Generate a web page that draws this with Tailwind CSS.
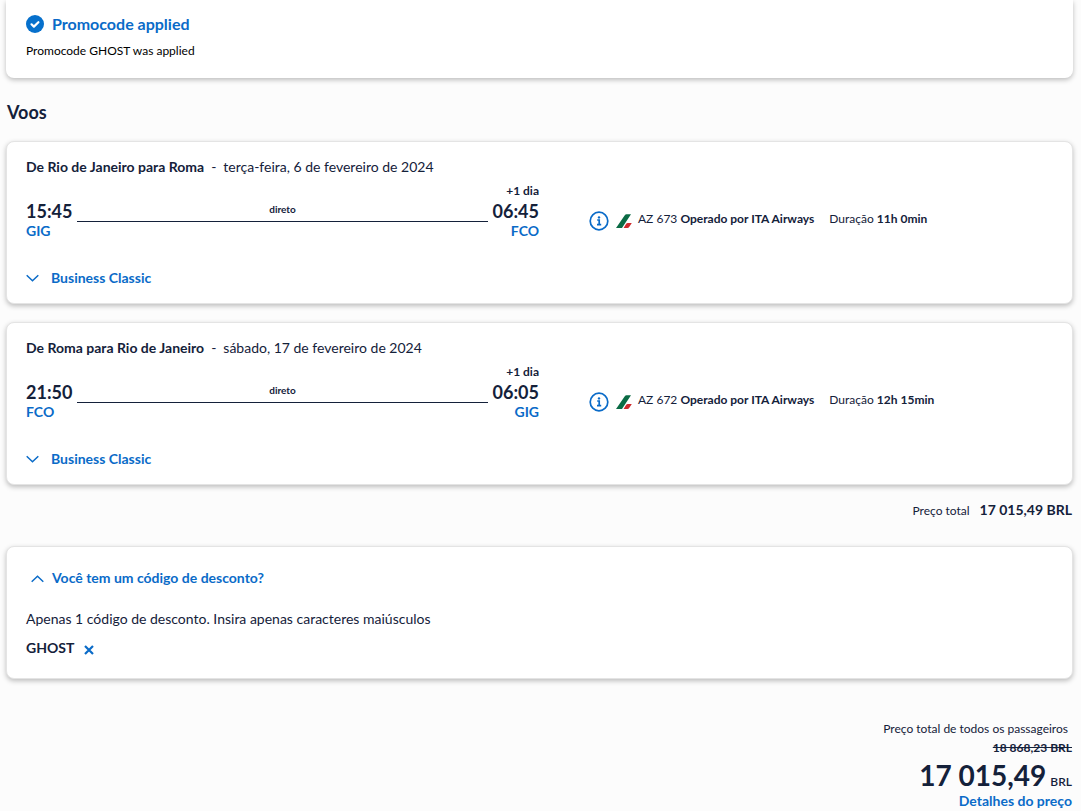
<!DOCTYPE html>
<html lang="pt">
<head>
    <meta charset="UTF-8">
    <meta name="viewport" content="width=device-width, initial-scale=1.0">
    <title>Resumo da viagem</title>
    <script src="https://cdn.jsdelivr.net/npm/@tailwindcss/browser@4"></script>
</head>
<body class="min-h-screen overflow-x-hidden bg-[#fcfcfc] font-['Lato',sans-serif] text-sm leading-5 text-[#14213a]">
    <main class="pr-2 pl-[6px]">
        <!-- Promocode notice -->
        <section class="rounded-b-lg bg-white px-5 pt-3 pb-[17px] shadow-[0_2px_5px_rgba(0,0,0,0.25)]">
            <div class="flex items-center gap-2">
                <svg class="size-[18px]" viewBox="0 0 18 18" aria-hidden="true">
                    <circle cx="9" cy="9" r="9" fill="#0670cc"/>
                    <path d="M5.5 9.3l2.4 2.3 4.5-4.4" fill="none" stroke="#fff" stroke-width="2.2" stroke-linecap="round" stroke-linejoin="round"/>
                </svg>
                <h2 class="text-base font-bold text-[#0a6bc8]">Promocode applied</h2>
            </div>
            <p class="mt-[5px] text-xs leading-5 text-black">Promocode GHOST was applied</p>
        </section>

        <h1 class="mt-[22px] pl-px text-lg leading-6 font-bold">Voos</h1>

        <!-- Outbound flight -->
        <section class="mt-[17px] rounded-lg border border-[#e4e4e4] bg-white px-[19px] py-[15px] shadow-[0_2px_5px_rgba(0,0,0,0.25)]">
            <h2><span class="font-bold">De Rio de Janeiro para Roma</span><span class="mx-[7px]">-</span><span>terça-feira, 6 de fevereiro de 2024</span></h2>
            <div class="mt-1 flex items-end">
                <div class="flex w-[513px] items-end">
                    <div>
                        <p class="text-lg leading-5 font-bold">15:45</p>
                        <a href="#" class="block leading-5 font-bold text-[#0a6bc8]">GIG</a>
                    </div>
                    <div class="mx-[5px] mb-[19px] flex-1 border-b border-[#14213a] pb-[2px] text-center text-[10px] leading-5 font-bold">direto</div>
                    <div class="text-right">
                        <p class="text-xs leading-5 font-bold">+1 dia</p>
                        <p class="text-lg leading-5 font-bold">06:45</p>
                        <a href="#" class="block leading-5 font-bold text-[#0a6bc8]">FCO</a>
                    </div>
                </div>
                <div class="mb-2 ml-[50px] flex items-center text-xs leading-5">
                    <button type="button" aria-label="Informações do voo">
                        <svg class="size-5" viewBox="0 0 20 20" fill="none" aria-hidden="true">
                            <circle cx="10" cy="10" r="8.8" stroke="#0a6bc8" stroke-width="1.7"/>
                            <path d="M8.2 9h2v4.4M8 13.7h4.2" stroke="#0a6bc8" stroke-width="1.7"/>
                            <circle cx="10" cy="6.4" r="1.2" fill="#0a6bc8"/>
                        </svg>
                    </button>
                    <svg class="ml-[7px] h-4 w-4" viewBox="0 0 16 16" aria-hidden="true">
                        <path d="M0 15L8.8 2.3Q9.4 1.3 10.5 1.3H15L6 15z" fill="#0b6b45"/>
                        <path d="M7.6 15l2.6-4.2q.6-.9 1.6-.9h4L13 14.2q-.5.8-1.5.8z" fill="#cf2a2e"/>
                    </svg>
                    <p class="ml-[6px] mb-1">AZ 673 <b>Operado por ITA Airways</b></p>
                    <p class="ml-[15px] mb-1">Duração <b>11h 0min</b></p>
                </div>
            </div>
            <button type="button" class="mt-[27px] flex cursor-pointer items-center gap-3 font-bold text-[#0a6bc8]">
                <svg class="h-3 w-[13px]" viewBox="0 0 13 12" fill="none" aria-hidden="true"><path d="M.7 3.2l5.8 5.6 5.8-5.6" stroke="#0a6bc8" stroke-width="1.5"/></svg>
                Business Classic
            </button>
        </section>

        <!-- Return flight -->
        <section class="mt-[18px] rounded-lg border border-[#e4e4e4] bg-white px-[19px] py-[15px] shadow-[0_2px_5px_rgba(0,0,0,0.25)]">
            <h2><span class="font-bold">De Roma para Rio de Janeiro</span><span class="mx-[7px]">-</span><span>sábado, 17 de fevereiro de 2024</span></h2>
            <div class="mt-1 flex items-end">
                <div class="flex w-[513px] items-end">
                    <div>
                        <p class="text-lg leading-5 font-bold">21:50</p>
                        <a href="#" class="block leading-5 font-bold text-[#0a6bc8]">FCO</a>
                    </div>
                    <div class="mx-[5px] mb-[19px] flex-1 border-b border-[#14213a] pb-[2px] text-center text-[10px] leading-5 font-bold">direto</div>
                    <div class="text-right">
                        <p class="text-xs leading-5 font-bold">+1 dia</p>
                        <p class="text-lg leading-5 font-bold">06:05</p>
                        <a href="#" class="block leading-5 font-bold text-[#0a6bc8]">GIG</a>
                    </div>
                </div>
                <div class="mb-2 ml-[50px] flex items-center text-xs leading-5">
                    <button type="button" aria-label="Informações do voo">
                        <svg class="size-5" viewBox="0 0 20 20" fill="none" aria-hidden="true">
                            <circle cx="10" cy="10" r="8.8" stroke="#0a6bc8" stroke-width="1.7"/>
                            <path d="M8.2 9h2v4.4M8 13.7h4.2" stroke="#0a6bc8" stroke-width="1.7"/>
                            <circle cx="10" cy="6.4" r="1.2" fill="#0a6bc8"/>
                        </svg>
                    </button>
                    <svg class="ml-[7px] h-4 w-4" viewBox="0 0 16 16" aria-hidden="true">
                        <path d="M0 15L8.8 2.3Q9.4 1.3 10.5 1.3H15L6 15z" fill="#0b6b45"/>
                        <path d="M7.6 15l2.6-4.2q.6-.9 1.6-.9h4L13 14.2q-.5.8-1.5.8z" fill="#cf2a2e"/>
                    </svg>
                    <p class="ml-[6px] mb-1">AZ 672 <b>Operado por ITA Airways</b></p>
                    <p class="ml-[15px] mb-1">Duração <b>12h 15min</b></p>
                </div>
            </div>
            <button type="button" class="mt-[27px] flex cursor-pointer items-center gap-3 font-bold text-[#0a6bc8]">
                <svg class="h-3 w-[13px]" viewBox="0 0 13 12" fill="none" aria-hidden="true"><path d="M.7 3.2l5.8 5.6 5.8-5.6" stroke="#0a6bc8" stroke-width="1.5"/></svg>
                Business Classic
            </button>
        </section>

        <p class="mt-[15px] flex items-baseline justify-end gap-[10px] pr-px"><span class="text-xs leading-5">Preço total</span><span class="font-bold">17 015,49 BRL</span></p>

        <!-- Discount code -->
        <section class="mt-[25px] rounded-lg border border-[#e4e4e4] bg-white px-[19px] pt-[21px] pb-5 shadow-[0_2px_5px_rgba(0,0,0,0.25)]">
            <button type="button" class="ml-[5px] flex cursor-pointer items-center gap-2 font-bold text-[#0a6bc8]">
                <svg class="h-3 w-[13px]" viewBox="0 0 13 12" fill="none" aria-hidden="true"><path d="M.7 9.8l5.8-5.6 5.8 5.6" stroke="#0a6bc8" stroke-width="1.5"/></svg>
                Você tem um código de desconto?
            </button>
            <p class="mt-[21px]">Apenas 1 código de desconto. Insira apenas caracteres maiúsculos</p>
            <div class="mt-[9px] flex items-center gap-[10px]">
                <span class="font-bold">GHOST</span>
                <button type="button" class="mt-1 cursor-pointer" aria-label="Remover código">
                    <svg class="size-[10px]" viewBox="0 0 10 10" aria-hidden="true"><path d="M1 1l8 8M9 1l-8 8" stroke="#0a6bc8" stroke-width="2.2"/></svg>
                </button>
            </div>
        </section>

        <!-- Grand total -->
        <div class="mt-10 flex flex-col items-end pr-px">
            <p class="mr-1 text-xs leading-5">Preço total de todos os passageiros</p>
            <s class="mt-px text-xs leading-4 font-bold">18 868,23 BRL</s>
            <p class="mt-px flex items-baseline gap-1 leading-9"><span class="text-[28px] font-bold">17 015,49</span><span class="text-xs leading-5 font-semibold">BRL</span></p>
            <a href="#" class="leading-4 font-bold text-[#0a6bc8]">Detalhes do preço</a>
        </div>
    </main>
</body>
</html>
